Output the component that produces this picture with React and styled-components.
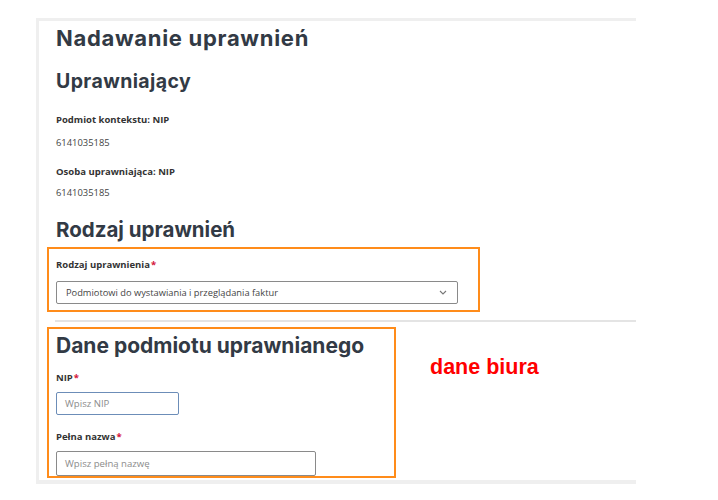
import React from 'react'
import styled, { createGlobalStyle } from 'styled-components'

const GlobalStyle = createGlobalStyle`
	body {
		margin: 0;
		background: #ffffff;
		font-family: "Open Sans", "Noto Sans", sans-serif;
	}
`

const Frame = styled.div`
	margin: 18px 0 0 36px;
	width: 597px;
	border-top: 3px solid #efefef;
	border-left: 3px solid #efefef;
	border-bottom: 4px solid #efefef;
	padding-bottom: 2px;
`

const Heading = styled.h1`
	margin: ${p => p.$top}px 0 0 17px;
	font-family: Inter, "DejaVu Sans", sans-serif;
	font-weight: 700;
	font-size: ${p => p.$size}px;
	line-height: ${p => p.$size + 4}px;
	color: #323a45;
	letter-spacing: ${p => p.$spacing || 0}px;
`

const BoxHeading = styled(Heading)`
	margin-left: 7px;
`

const Label = styled.div`
	margin: ${p => p.$top}px 0 0 ${p => (p.$inset ? 7 : 17)}px;
	font-size: 9.5px;
	line-height: 12px;
	font-weight: 700;
	color: #333333;
`

const Value = styled.div`
	margin: ${p => p.$top}px 0 0 17px;
	font-size: 9.4px;
	line-height: 12px;
	color: #444444;
`

const Star = styled.span`
	color: #d4143c;
	margin-left: 1px;
`

const Highlight = styled.section`
	margin: ${p => p.$top}px 0 0 8px;
	width: ${p => p.$width}px;
	border: 2px solid #ff8c1a;
	padding: ${p => p.$pt}px 0 ${p => p.$pb}px;
	box-sizing: border-box;
	flex-shrink: 0;
`

const Select = styled.div`
	margin: 10.5px 0 0 7px;
	width: 402px;
	height: 23px;
	box-sizing: border-box;
	border: 1px solid #8a8a8a;
	border-radius: 2px;
	display: flex;
	align-items: center;
	justify-content: space-between;
	padding: 0 10px 0 9px;
	font-size: 9.3px;
	color: #444444;
`

const Field = styled.div`
	margin: 8.5px 0 0 7px;
	width: ${p => p.$width}px;
	height: ${p => p.$height}px;
	box-sizing: border-box;
	border: 1px solid ${p => (p.$focused ? '#6c8db8' : '#8a8a8a')};
	border-radius: 2px;
	display: flex;
	align-items: center;
	padding-left: 8px;
	font-size: 9.6px;
	color: #8c8c8c;
`

const Divider = styled.div`
	margin: 8px 0 0 16px;
	height: 2px;
	background: #e4e4e4;
`

const Row = styled.div`
	display: flex;
	align-items: flex-start;
`

const Note = styled.div`
	margin: 33px 0 0 34px;
	font-family: "Liberation Sans", Arial, sans-serif;
	font-weight: 700;
	font-size: 21.5px;
	line-height: 24px;
	color: #ff0000;
`

const Chevron = () => (
	<svg width="8" height="5" viewBox="0 0 8 5">
		<polyline points="1,1 4,4 7,1" fill="none" stroke="#777" strokeWidth="1.1" />
	</svg>
)

const App = () => (
	<>
		<GlobalStyle />
		<Frame>
			<Heading $size={22} $top={4} $spacing={0.7}>Nadawanie uprawnień</Heading>
			<Heading $size={19.5} $top={19} $spacing={0.4}>Uprawniający</Heading>
			<Label $top={20.5}>Podmiot kontekstu: NIP</Label>
			<Value $top={10.5}>6141035185</Value>
			<Label $top={17}>Osoba uprawniająca: NIP</Label>
			<Value $top={9}>6141035185</Value>
			<Heading $size={20.5} $top={19.5}>Rodzaj uprawnień</Heading>

			<Highlight $top={4} $width={433} $pt={10} $pb={6}>
				<Label $top={0} $inset>Rodzaj uprawnienia<Star>*</Star></Label>
				<Select>
					<span>Podmiotowi do wystawiania i przeglądania faktur</span>
					<Chevron />
				</Select>
			</Highlight>

			<Divider />

			<Row>
				<Highlight $top={5} $width={349} $pt={4} $pb={0}>
					<BoxHeading $size={21} $top={0}>Dane podmiotu uprawnianego</BoxHeading>
					<Label $top={13.5} $inset>NIP<Star>*</Star></Label>
					<Field $width={123} $height={23} $focused>Wpisz NIP</Field>
					<Label $top={15.5} $inset>Pełna nazwa<Star>*</Star></Label>
					<Field $width={260} $height={25}>Wpisz pełną nazwę</Field>
				</Highlight>
				<Note>dane biura</Note>
			</Row>
		</Frame>
	</>
)

export default App
